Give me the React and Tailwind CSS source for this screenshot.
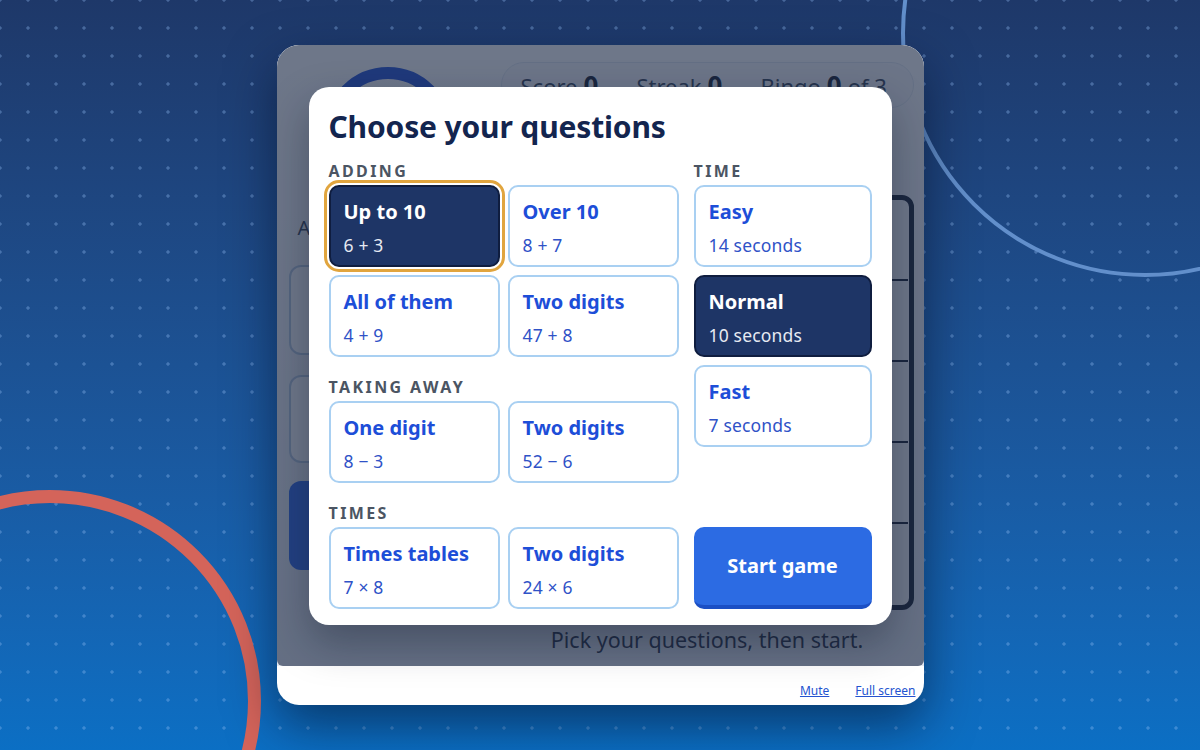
import clsx from "clsx";

const adding = [
  { title: "Up to 10", sample: "6 + 3", selected: true },
  { title: "Over 10", sample: "8 + 7" },
  { title: "All of them", sample: "4 + 9" },
  { title: "Two digits", sample: "47 + 8" },
];

const takingAway = [
  { title: "One digit", sample: "8 − 3" },
  { title: "Two digits", sample: "52 − 6" },
];

const times = [
  { title: "Times tables", sample: "7 × 8" },
  { title: "Two digits", sample: "24 × 6" },
];

const speeds = [
  { title: "Easy", sample: "14 seconds" },
  { title: "Normal", sample: "10 seconds", active: true },
  { title: "Fast", sample: "7 seconds" },
];

function Option({ title, sample, selected, active }) {
  const dark = selected || active;
  return (
    <button
      className={clsx(
        "h-[82px] w-full rounded-[10px] border-2 px-[13px] pt-[7px] text-left",
        dark ? "bg-[#1e3566] border-[#0f1d3f] text-white" : "bg-white border-[#a9d0f2] text-[#1d4ed8]",
        selected && "outline-3 outline-offset-2 outline-[#e1a53e]"
      )}
    >
      <div className="text-[20px] leading-[22px] font-bold">{title}</div>
      <div
        className={clsx(
          "mt-[10px] text-[17.5px] leading-6 tracking-[0.01em]",
          dark ? "text-[#e6eaf2]" : "text-[#2f52c7]"
        )}
      >
        {sample}
      </div>
    </button>
  );
}

function Label({ children }) {
  return (
    <div className="mb-1 h-5 text-[16px] leading-5 font-bold tracking-[2.4px] text-[#4b5563]">{children}</div>
  );
}

function Section({ label, items, className }) {
  return (
    <div className={className}>
      <Label>{label}</Label>
      <div className="grid grid-cols-2 gap-2">
        {items.map((o, i) => (
          <Option key={i} {...o} />
        ))}
      </div>
    </div>
  );
}

function TimerRing() {
  return (
    <svg width="128" height="128" viewBox="0 0 128 128">
      <circle cx="64" cy="64" r="58" fill="none" stroke="#1d4ed8" strokeWidth="12" />
    </svg>
  );
}

function Stat({ label, value, suffix }) {
  return (
    <span className="flex items-baseline gap-[6px] text-[22px] text-[#334155]">
      {label}
      <b className="text-[26px] text-[#0f172a]">{value}</b>
      {suffix && <span>{suffix}</span>}
    </span>
  );
}

function BingoBoard() {
  const cells = Array.from({ length: 25 });
  return (
    <div className="mt-[87px] h-[415px] overflow-hidden rounded-[12px] border-[5px] border-[#0f172a] bg-white">
      <div className="grid h-full grid-cols-5 grid-rows-5">
        {cells.map((_, i) => (
          <div
            key={i}
            className={clsx("border-[#0f172a]", i % 5 !== 4 && "border-r-2", i < 20 && "border-b-2")}
          />
        ))}
      </div>
    </div>
  );
}

export default function App() {
  return (
    <div className="relative flex h-[750px] w-[1200px] items-center justify-center overflow-hidden bg-linear-to-b from-[#1e3869] to-[#0b6fc4] font-['Noto_Sans',sans-serif]">
      {/* dotted backdrop */}
      <div className="absolute inset-0 bg-[radial-gradient(circle,rgba(148,190,245,0.35)_1.4px,transparent_1.9px)] bg-[size:28px_28px] bg-[position:14px_14px]" />
      <svg className="absolute inset-0" width="1200" height="750" viewBox="0 0 1200 750">
        <circle cx="50" cy="701" r="204.5" fill="none" stroke="#d4645a" strokeWidth="13" />
        <circle cx="1145" cy="33" r="242" fill="none" stroke="#628fcb" strokeWidth="4" />
      </svg>

      <div className="relative z-10 flex h-[660px] w-[647px] flex-col overflow-hidden rounded-[22px] bg-white shadow-[0_20px_50px_rgba(2,10,30,0.5)]">
        {/* game screen */}
        <div className="relative flex flex-1 gap-[14px] bg-linear-to-b from-white to-[#e5e9f0] pl-[12px] pr-[10px] pt-[17px]">
          <div className="flex w-[198px] flex-col">
            <div className="mt-[5px] flex justify-center">
              <TimerRing />
            </div>
            <div className="mt-[19px] pl-[9px] text-[20px] leading-7 text-[#334155]">Add</div>
            <div className="mt-[23px] h-[90px] rounded-[12px] border-2 border-[#b6c8e0] bg-white" />
            <div className="mt-[20px] h-[88px] rounded-[12px] border-2 border-[#b6c8e0] bg-white" />
            <div className="mt-[18px] h-[89px] rounded-[12px] bg-[#2563eb]" />
          </div>
          <div className="flex flex-1 flex-col">
            <div className="flex h-[46px] items-center gap-[38px] rounded-full border border-[#e2e8f0] bg-[#f8fafc] pl-[19px]">
              <Stat label="Score" value="0" />
              <Stat label="Streak" value="0" />
              <Stat label="Bingo" value="0" suffix="of 3" />
            </div>
            <BingoBoard />
            <p className="mt-[15px] text-center text-[21.5px] leading-[30px] text-[#1e293b]">
              Pick your questions, then start.
            </p>
          </div>

          <div className="absolute inset-0 flex items-center justify-center rounded-b-md bg-[#202e49]/65">
            <div className="w-[583px] rounded-[20px] bg-white px-5 pb-4 pt-5 shadow-[0_18px_40px_rgba(15,23,42,0.35)]">
              <h2 className="text-[30px] leading-10 font-bold tracking-[-0.005em] text-[#13254f]">
                Choose your questions
              </h2>
              <div className="mt-[14px] flex gap-[15px]">
                <div className="w-[350px]">
                  <Section label="ADDING" items={adding} />
                  <Section label="TAKING AWAY" items={takingAway} className="mt-5" />
                  <Section label="TIMES" items={times} className="mt-5" />
                </div>
                <div className="flex w-[178px] flex-col">
                  <Label>TIME</Label>
                  <div className="flex flex-col gap-2">
                    {speeds.map((o, i) => (
                      <Option key={i} {...o} />
                    ))}
                  </div>
                  <button className="mt-auto h-[82px] rounded-[10px] border-b-4 border-[#1b4fc4] bg-[#2c6be3] text-[20px] font-bold text-white">
                    Start game
                  </button>
                </div>
              </div>
            </div>
          </div>
        </div>

        {/* footer links */}
        <div className="flex h-[39px] items-end justify-end gap-[26px] pb-[6px] pr-[8px] text-[12px] leading-4">
          <a className="text-[#2453d0] underline">Mute</a>
          <a className="text-[#2453d0] underline">Full screen</a>
        </div>
      </div>
    </div>
  );
}
